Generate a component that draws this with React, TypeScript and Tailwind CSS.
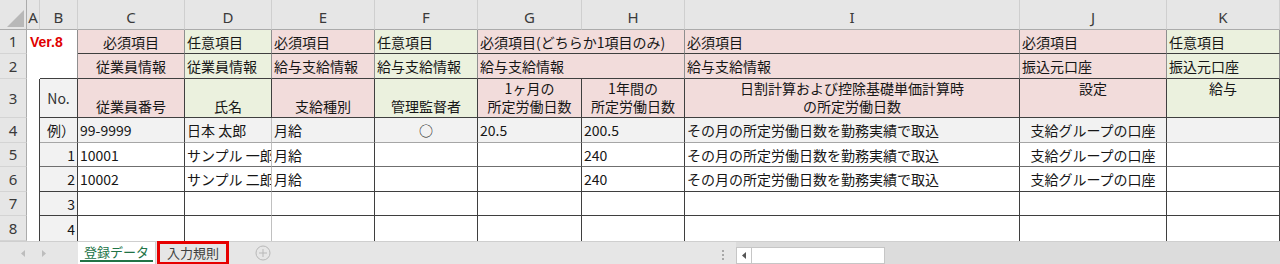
import React from "react";

type P = { className?: string; children?: React.ReactNode };
const Cell = ({ className = "", children }: P) => (
  <div className={`min-w-0 overflow-hidden whitespace-nowrap leading-[18px] ${className}`}>{children}</div>
);

const colHdr =
  "flex justify-center items-center pt-[6px] bg-[#e6e6e6] border-r border-b border-r-[#cfcfcf] border-b-[#ababab] text-[15px] text-[#3a3a3a] font-['Noto_Sans',sans-serif]";
const rowHdr =
  "flex justify-center items-center bg-[#e6e6e6] border-r border-b border-r-[#ababab] border-b-[#d4d4d4] text-[15px] text-[#3a3a3a] font-['Noto_Sans',sans-serif]";

const pink = "bg-[#f2dcdb]";
const green = "bg-[#ebf1de]";
const top = "flex items-center pl-[2px] border-r border-b border-r-[#8f8f8f] border-b-[#3f3f3f]";
const topC = "flex items-center justify-center border-r border-b border-r-[#8f8f8f] border-b-[#3f3f3f]";
const h3 = "flex flex-col items-center border-r border-b border-r-[#3f3f3f] border-b-[#3f3f3f]";

const dark = "border-r border-r-[#3f3f3f]";
const light = "border-r border-r-[#c0c0c0]";

const rows = [
  {
    n: "4", no: "例）", c: "99-9999", d: "日本 太郎", e: "月給", f: "○", g: "20.5", h: "200.5",
    i: "その月の所定労働日数を勤務実績で取込", j: "支給グループの口座",
    bg: "bg-[#f2f2f2]", bb: "border-b border-b-[#a6a6a6]",
  },
  {
    n: "5", no: "1", c: "10001", d: "サンプル 一郎", e: "月給", f: "", g: "", h: "240",
    i: "その月の所定労働日数を勤務実績で取込", j: "支給グループの口座",
    bg: "bg-white", bb: "border-b border-b-[#6f6f6f]",
  },
  {
    n: "6", no: "2", c: "10002", d: "サンプル 二郎", e: "月給", f: "", g: "", h: "240",
    i: "その月の所定労働日数を勤務実績で取込", j: "支給グループの口座",
    bg: "bg-white", bb: "border-b border-b-[#3f3f3f]",
  },
  { n: "7", no: "3", c: "", d: "", e: "", f: "", g: "", h: "", i: "", j: "", bg: "bg-white", bb: "border-b border-b-[#3f3f3f]" },
  { n: "8", no: "4", c: "", d: "", e: "", f: "", g: "", h: "", i: "", j: "", bg: "bg-white", bb: "" },
];

export default function App() {
  return (
    <div className="w-[1280px] h-[264px] overflow-hidden bg-white font-['Noto_Sans_CJK_JP',sans-serif] text-[14px] text-[#161616]">
      <div className="grid grid-cols-[27px_13px_38px_107px_87px_103px_103px_104px_103px_335px_147px_113px] grid-rows-[30px_24px_25px_39px_25px_24px_25px_24px_25px]">
        {/* column headers */}
        <div className="relative bg-[#e6e6e6] border-r border-b border-r-[#ababab] border-b-[#ababab]">
          <svg className="absolute left-0 top-0" width="27" height="30" viewBox="0 0 27 30">
            <polygon points="7,27 24,27 24,10" fill="#b8b8b8" />
          </svg>
        </div>
        {["A", "B", "C", "D", "E", "F", "G", "H", "I", "J", "K"].map((l) => (
          <div key={l} className={colHdr}>
            {l}
          </div>
        ))}

        {/* row 1 */}
        <div className={rowHdr}>1</div>
        <Cell className="col-span-2 flex items-center pl-[3px] border-r border-r-[#8f8f8f] font-['Liberation_Sans',sans-serif] font-bold text-[14px] text-[#e00000]">
          Ver.8
        </Cell>
        <Cell className={`${topC} ${pink}`}>必須項目</Cell>
        <Cell className={`${top} ${green}`}>任意項目</Cell>
        <Cell className={`${top} ${pink}`}>必須項目</Cell>
        <Cell className={`${top} ${green}`}>任意項目</Cell>
        <Cell className={`col-span-2 ${top} ${pink}`}>必須項目(どちらか1項目のみ)</Cell>
        <Cell className={`${top} ${pink}`}>必須項目</Cell>
        <Cell className={`${top} ${pink}`}>必須項目</Cell>
        <Cell className={`${top} ${green}`}>任意項目</Cell>

        {/* row 2 */}
        <div className={rowHdr}>2</div>
        <Cell />
        <Cell className="border-b border-b-[#3f3f3f] border-r border-r-[#8f8f8f]" />
        <Cell className={`${topC} ${pink}`}>従業員情報</Cell>
        <Cell className={`${top} ${green}`}>従業員情報</Cell>
        <Cell className={`${top} ${pink}`}>給与支給情報</Cell>
        <Cell className={`${top} ${green}`}>給与支給情報</Cell>
        <Cell className={`col-span-2 ${top} ${pink}`}>給与支給情報</Cell>
        <Cell className={`${top} ${pink}`}>給与支給情報</Cell>
        <Cell className={`${top} ${pink}`}>振込元口座</Cell>
        <Cell className={`${top} ${green}`}>振込元口座</Cell>

        {/* row 3 */}
        <div className={rowHdr}>3</div>
        <Cell className={dark} />
        <Cell className="flex items-center justify-center bg-[#f2f2f2] border-r border-b border-r-[#3f3f3f] border-b-[#3f3f3f] text-[#333]">
          No.
        </Cell>
        <Cell className={`${h3} justify-end pb-[2px] ${pink}`}>従業員番号</Cell>
        <Cell className={`${h3} justify-end pb-[2px] ${green}`}>氏名</Cell>
        <Cell className={`${h3} justify-end pb-[2px] ${pink}`}>支給種別</Cell>
        <Cell className={`${h3} justify-end pb-[2px] ${green}`}>管理監督者</Cell>
        <Cell className={`${h3} justify-end pb-[2px] ${pink}`}>
          <span>1ヶ月の</span>
          <span>所定労働日数</span>
        </Cell>
        <Cell className={`${h3} justify-end pb-[2px] ${pink}`}>
          <span>1年間の</span>
          <span>所定労働日数</span>
        </Cell>
        <Cell className={`${h3} justify-start pt-[0px] ${pink}`}>
          <span>日割計算および控除基礎単価計算時</span>
          <span>の所定労働日数</span>
        </Cell>
        <Cell className={`${h3} justify-start pt-[0px] ${pink}`}>設定</Cell>
        <Cell className={`${h3} justify-start pt-[0px] ${green}`}>給与</Cell>

        {/* data rows */}
        {rows.map((r) => (
          <React.Fragment key={r.n}>
            <div className={rowHdr}>{r.n}</div>
            <Cell className={dark} />
            <Cell className={`flex items-center justify-end pr-[2px] bg-[#f2f2f2] ${dark} ${r.bb}`}>{r.no}</Cell>
            <Cell className={`flex items-center pl-[2px] ${r.bg} ${dark} ${r.bb}`}>{r.c}</Cell>
            <Cell className={`flex items-center pl-[2px] ${r.bg} ${light} ${r.bb}`}>{r.d}</Cell>
            <Cell className={`flex items-center pl-[2px] ${r.bg} ${dark} ${r.bb}`}>{r.e}</Cell>
            <Cell className={`flex items-center justify-center ${r.bg} ${dark} ${r.bb}`}>{r.f}</Cell>
            <Cell className={`flex items-center pl-[2px] ${r.bg} ${dark} ${r.bb}`}>{r.g}</Cell>
            <Cell className={`flex items-center pl-[2px] ${r.bg} ${dark} ${r.bb}`}>{r.h}</Cell>
            <Cell className={`flex items-center pl-[2px] ${r.bg} ${dark} ${r.bb}`}>{r.i}</Cell>
            <Cell className={`flex items-center justify-center ${r.bg} ${dark} ${r.bb}`}>{r.j}</Cell>
            <Cell className={`${r.bg} ${dark} ${r.bb}`} />
          </React.Fragment>
        ))}
      </div>

      {/* sheet tab bar */}
      <div className="flex h-[23px] bg-[#e6e6e6] border-t border-t-[#cfcfcf]">
        <div className="w-[78px] flex items-center">
          <svg className="ml-[21px]" width="4" height="7" viewBox="0 0 4 7">
            <polygon points="4,0 4,7 0,3.5" fill="#bdbdbd" />
          </svg>
          <svg className="ml-[17px]" width="4" height="7" viewBox="0 0 4 7">
            <polygon points="0,0 0,7 4,3.5" fill="#bdbdbd" />
          </svg>
        </div>
        <div className="relative w-[78px] bg-white flex items-center justify-center text-[13px] text-[#217346] border-r border-r-[#cfcfcf]">
          <span className="-mt-[2px]">登録データ</span>
          <div className="absolute left-[2px] right-[2px] bottom-[2px] h-[2px] bg-[#217346]" />
        </div>
        <div className="ml-[1px] w-[72px] -mt-[1px] h-[24px] border-[3px] border-[#e60000] flex items-center justify-center text-[13px] text-[#404040]">
          <span className="-mt-[1px]">入力規則</span>
        </div>
        <div className="w-[68px] flex items-center justify-center">
          <svg width="16" height="16" viewBox="0 0 16 16">
            <circle cx="8" cy="8" r="7" fill="none" stroke="#b8b8b8" strokeWidth="1" />
            <line x1="4" y1="8" x2="12" y2="8" stroke="#b8b8b8" strokeWidth="1" />
            <line x1="8" y1="4" x2="8" y2="12" stroke="#b8b8b8" strokeWidth="1" />
          </svg>
        </div>
        <div className="flex-1" />
        <div className="w-[18px] flex flex-col justify-center gap-[2px] pl-[4px] pt-[3px]">
          <div className="w-[2px] h-[2px] bg-[#a8a8a8]" />
          <div className="w-[2px] h-[2px] bg-[#a8a8a8]" />
          <div className="w-[2px] h-[2px] bg-[#a8a8a8]" />
        </div>
        <div className="w-[544px] flex items-end bg-[#dcdcdc] pt-[2px]">
          <div className="w-[16px] h-[17px] bg-white border border-[#c6c6c6] flex items-center justify-center">
            <svg width="4" height="7" viewBox="0 0 4 7">
              <polygon points="4,0 4,7 0,3.5" fill="#555" />
            </svg>
          </div>
          <div className="w-[133px] h-[17px] bg-white border border-l-0 border-[#c6c6c6]" />
        </div>
      </div>
    </div>
  );
}
